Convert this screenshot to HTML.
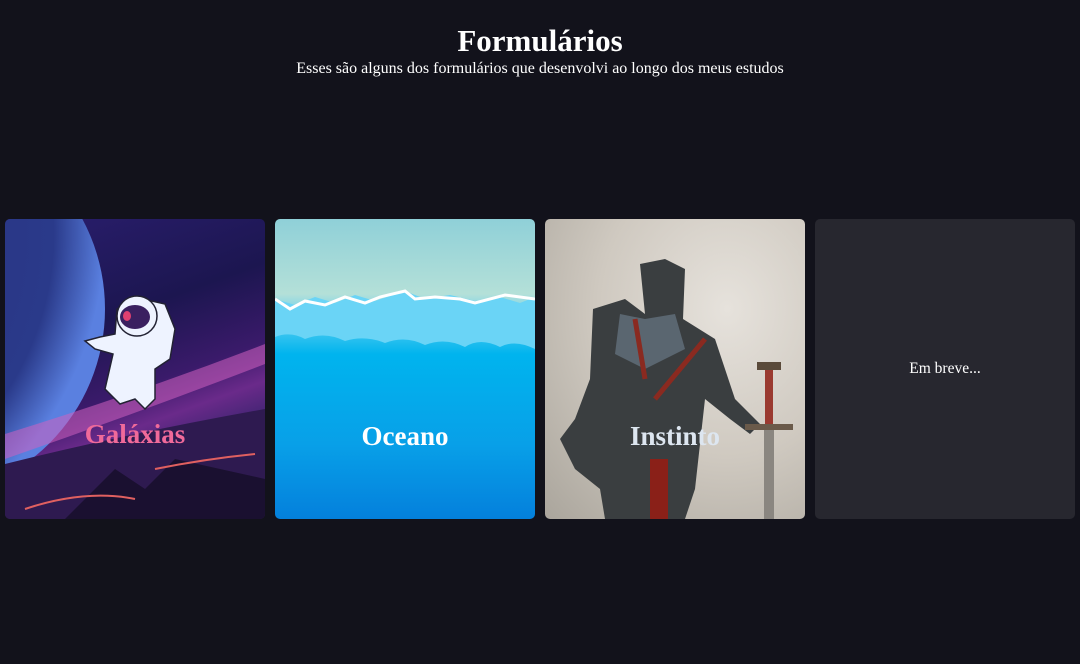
<!DOCTYPE html>
<html><head><meta charset="utf-8"><style>
*{margin:0;padding:0;box-sizing:border-box}
body{width:1080px;height:664px;background:#12121b;font-family:"Liberation Serif",serif;color:#fff;position:relative;overflow:hidden}
h1{position:absolute;top:24px;left:0;width:1080px;text-align:center;font-size:31px;font-weight:bold;line-height:34px}
p.sub{position:absolute;top:60px;left:0;width:1080px;text-align:center;font-size:16px;line-height:18px}
.card{position:absolute;top:219px;width:260px;height:300px;border-radius:5px;overflow:hidden}
.lbl{position:absolute;left:0;width:260px;text-align:center;font-weight:bold;font-size:27px;top:200px}
</style></head><body>
<h1>Formulários</h1>
<p class="sub">Esses são alguns dos formulários que desenvolvi ao longo dos meus estudos</p>

<div class="card" style="left:5px;background:linear-gradient(160deg,#2a1e6e 0%,#1c1650 35%,#3a1a6a 55%,#6a2a8a 65%,#3c2470 75%,#1a1240 100%)">
<svg width="260" height="300" style="position:absolute;left:0;top:0">
<defs><radialGradient id="pl" cx="0.1" cy="0.3" r="0.9"><stop offset="0" stop-color="#2a2a7a"/><stop offset="0.85" stop-color="#2a3a8a"/><stop offset="1" stop-color="#5a80e0"/></radialGradient></defs>
<circle cx="-90" cy="90" r="190" fill="url(#pl)"/>
<path d="M0 215 Q130 175 260 125 L260 145 Q130 195 0 240Z" fill="#d060c0" opacity="0.55"/>
<path d="M0 245 Q120 215 260 190 L260 300 L0 300Z" fill="#2e1a50"/>
<path d="M60 300 L110 250 L140 270 L170 240 L260 260 L260 300Z" fill="#1a1030"/>
<path d="M20 290 Q80 270 130 280 M150 250 Q200 240 250 235" stroke="#e06060" stroke-width="2" fill="none"/>
<g>
<path d="M112 90 L138 80 L160 85 L170 110 L165 140 L150 150 L150 180 L140 190 L130 180 L115 185 L100 170 L108 135 L90 130 L80 122 L95 118 L110 115Z" fill="#eef3ff" stroke="#223" stroke-width="1.5"/>
<circle cx="132" cy="97" r="20" fill="#eef3ff" stroke="#223" stroke-width="1.5"/>
<ellipse cx="130" cy="98" rx="15" ry="12" fill="#3a2060"/>
<ellipse cx="122" cy="97" rx="4" ry="5" fill="#e04070"/>
</g>
</svg>
<div class="lbl" style="color:#f06a9a">Galáxias</div>
</div>

<div class="card" style="left:275px;background:linear-gradient(180deg,#8fd0d8 0%,#b4e0d8 25%,#60d0f0 33%,#00b4ee 45%,#08a0e8 75%,#0480dc 100%)">
<svg width="260" height="300" style="position:absolute;left:0;top:0">
<path d="M0 80 L20 86 L40 78 L60 84 L80 76 L100 82 L130 72 L150 80 L175 76 L200 82 L225 78 L245 84 L260 78 L260 130 Q240 120 225 128 Q205 118 190 128 Q170 118 150 126 Q130 116 110 124 Q90 116 70 122 Q50 112 30 120 Q15 112 0 118Z" fill="#6ad4f6"/>
<path d="M0 80 L15 90 L30 82 L50 86 L70 78 L90 84 L105 78 L130 72 L140 80 L160 78 L185 80 L200 84 L230 76 L260 80" stroke="#fff" stroke-width="3" fill="none"/>
</svg>
<div class="lbl" style="top:202px">Oceano</div>
</div>

<div class="card" style="left:545px;background:radial-gradient(ellipse at 70% 30%,#e6e2dc 0%,#cfc9c0 50%,#aaa59c 100%)">
<svg width="260" height="300" style="position:absolute;left:0;top:0">
<path d="M95 45 L120 40 L140 50 L138 100 L170 120 L190 180 L215 205 L205 215 L185 200 L160 180 L150 270 L140 300 L60 300 L55 270 L30 250 L15 220 L30 200 L45 160 L48 90 L80 80 L100 95Z" fill="#3a3e40"/>
<path d="M75 95 L100 100 L130 95 L140 130 L100 150 L70 135Z" fill="#5a6670"/>
<path d="M90 100 L100 160 M160 120 L110 180" stroke="#8a2a20" stroke-width="5"/>
<rect x="105" y="240" width="18" height="60" fill="#8a2018"/>
<rect x="220" y="150" width="8" height="55" fill="#9a3a30"/>
<rect x="212" y="143" width="24" height="8" fill="#5a4a3a"/>
<rect x="200" y="205" width="48" height="6" fill="#6a5a4a"/>
<rect x="219" y="211" width="10" height="89" fill="#8a8680"/>
</svg>
<div class="lbl" style="top:202px;color:#dde6f0">Instinto</div>
</div>

<div class="card" style="left:815px;background:#27272f">
<div style="position:absolute;top:141px;width:260px;text-align:center;font-size:15.5px">Em breve...</div>
</div>
</body></html>
